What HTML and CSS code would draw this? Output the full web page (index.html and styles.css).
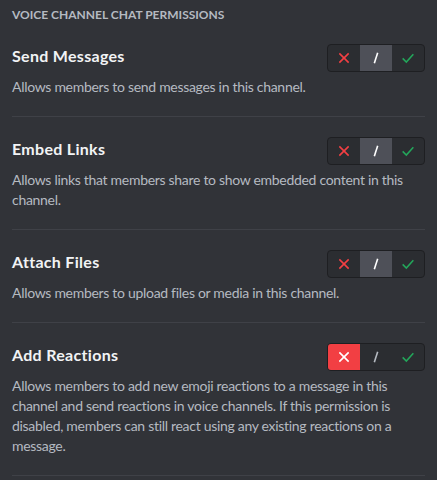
FILE: index.html
```html
<!DOCTYPE html>
<html>
<head>
<meta charset="utf-8">
<link rel="stylesheet" href="styles.css">
</head>
<body>
<div class="panel">
  <h2 class="section-title">Voice Channel Chat Permissions</h2>

  <div class="perm">
    <div class="perm-row">
      <div class="perm-name">Send Messages</div>
      <div class="toggle">
        <span class="seg seg-deny"><svg viewBox="0 0 24 24" class="ic"><path d="M5 5 L19 19 M19 5 L5 19"/></svg></span>
        <span class="seg seg-neutral active"><svg viewBox="0 0 24 24" class="ic"><path d="M14.5 4 L9.5 20"/></svg></span>
        <span class="seg seg-allow"><svg viewBox="0 0 24 24" class="ic"><path d="M4 12.5 L9.5 18 L20 6.5"/></svg></span>
      </div>
    </div>
    <p class="perm-desc">Allows members to send messages in this channel.</p>
  </div>

  <div class="perm">
    <div class="perm-row">
      <div class="perm-name">Embed Links</div>
      <div class="toggle">
        <span class="seg seg-deny"><svg viewBox="0 0 24 24" class="ic"><path d="M5 5 L19 19 M19 5 L5 19"/></svg></span>
        <span class="seg seg-neutral active"><svg viewBox="0 0 24 24" class="ic"><path d="M14.5 4 L9.5 20"/></svg></span>
        <span class="seg seg-allow"><svg viewBox="0 0 24 24" class="ic"><path d="M4 12.5 L9.5 18 L20 6.5"/></svg></span>
      </div>
    </div>
    <p class="perm-desc">Allows links that members share to show embedded content in this channel.</p>
  </div>

  <div class="perm">
    <div class="perm-row">
      <div class="perm-name">Attach Files</div>
      <div class="toggle">
        <span class="seg seg-deny"><svg viewBox="0 0 24 24" class="ic"><path d="M5 5 L19 19 M19 5 L5 19"/></svg></span>
        <span class="seg seg-neutral active"><svg viewBox="0 0 24 24" class="ic"><path d="M14.5 4 L9.5 20"/></svg></span>
        <span class="seg seg-allow"><svg viewBox="0 0 24 24" class="ic"><path d="M4 12.5 L9.5 18 L20 6.5"/></svg></span>
      </div>
    </div>
    <p class="perm-desc">Allows members to upload files or media in this channel.</p>
  </div>

  <div class="perm">
    <div class="perm-row">
      <div class="perm-name">Add Reactions</div>
      <div class="toggle">
        <span class="seg seg-deny active"><svg viewBox="0 0 24 24" class="ic"><path d="M5 5 L19 19 M19 5 L5 19"/></svg></span>
        <span class="seg seg-neutral"><svg viewBox="0 0 24 24" class="ic"><path d="M14.5 4 L9.5 20"/></svg></span>
        <span class="seg seg-allow"><svg viewBox="0 0 24 24" class="ic"><path d="M4 12.5 L9.5 18 L20 6.5"/></svg></span>
      </div>
    </div>
    <p class="perm-desc">Allows members to add new emoji reactions to a message in this channel and send reactions in voice channels. If this permission is disabled, members can still react using any existing reactions on a message.</p>
  </div>
</div>
</body>
</html>
```
FILE: styles.css
```css
html, body {
  margin: 0;
  padding: 0;
  background: #313338;
}
body {
  font-family: Lato, "Noto Sans", sans-serif;
  color: #f2f3f5;
}
.panel {
  padding: 7px 12px 0 12px;
}
.section-title {
  margin: 0;
  font-size: 12px;
  line-height: 16px;
  font-weight: 700;
  text-transform: uppercase;
  color: #b5bac1;
  letter-spacing: 0;
}
.perm {
  padding: 20px 0 19px;
  border-bottom: 1px solid #3f4147;
}
.perm:first-of-type {
  padding-top: 21px;
}
.perm-row {
  display: flex;
  align-items: center;
  justify-content: space-between;
}
.perm-name {
  font-size: 16px;
  line-height: 20px;
  font-weight: 700;
  color: #f2f3f5;
  letter-spacing: 0.3px;
  margin-top: -4px;
}
.toggle {
  display: flex;
  height: 26px;
  border: 1px solid #1e1f22;
  border-radius: 4px;
  background: #2b2d31;
  overflow: hidden;
}
.seg {
  width: 32px;
  display: flex;
  align-items: center;
  justify-content: center;
}
.ic {
  width: 16px;
  height: 16px;
  fill: none;
  stroke-width: 2.4;
  stroke-linecap: butt;
}
.seg-deny .ic { stroke: #f23f43; }
.seg-neutral .ic { stroke: #b5bac1; }
.seg-allow .ic { stroke: #23a55a; }
.seg-neutral.active { background: #4e5058; }
.seg-neutral.active .ic { stroke: #ffffff; }
.seg-deny.active { background: #f23f43; }
.seg-deny.active .ic { stroke: #ffffff; }
.perm-desc {
  margin: 5px 0 0;
  font-size: 14px;
  line-height: 20px;
  color: #b5bac1;
  font-weight: 400;
  letter-spacing: -0.3px;
}
```
